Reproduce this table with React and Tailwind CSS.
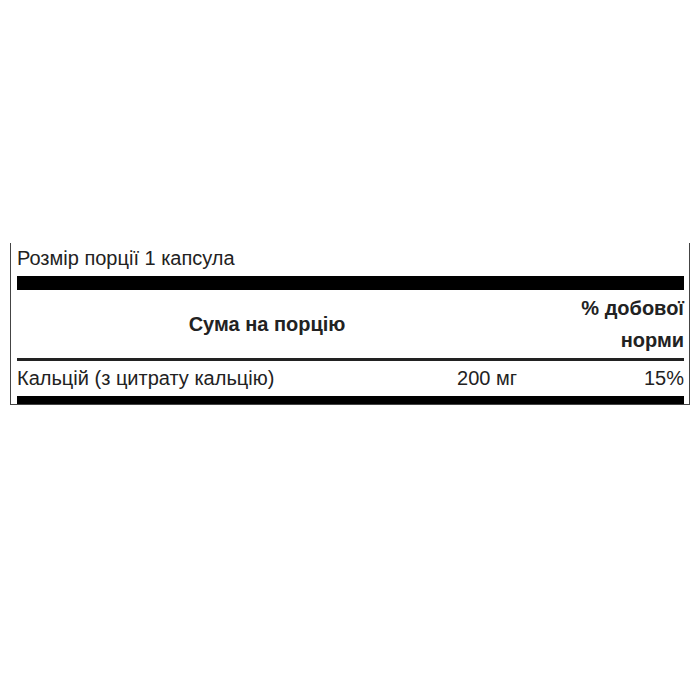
const App = () => {
  return (
    <div className="w-[700px] h-[700px] bg-white pt-[243px] font-['Liberation_Sans',Arial,sans-serif] text-[#222]">
      <div className="ml-[10px] w-[680px] border-l border-r border-b border-[#444] pl-[6px] pr-[5px]">
        <div className="pt-[1px] pb-[4px] text-[20px] leading-[28px]">
          Розмір порції 1 капсула
        </div>
        <div className="h-[14px] bg-black" />

        <div className="flex h-[68px] items-center">
          <div className="flex-1 text-center text-[20px] font-bold leading-[32px]">
            Сума на порцію
          </div>
          <div className="w-[167px] pt-[2px] pb-[2px] text-right text-[20px] font-bold leading-[32px]">
            <div>% добової</div>
            <div>норми</div>
          </div>
        </div>
        <div className="h-[3px] bg-[#222]" />

        <div className="flex h-[35px] items-center text-[20px] leading-[35px]">
          <div className="flex-1">Кальцій (з цитрату кальцію)</div>
          <div className="w-[90px] text-right">200 мг</div>
          <div className="w-[167px] text-right">15%</div>
        </div>
        <div className="h-[8px] bg-black" />
      </div>
    </div>
  )
}

export default App
